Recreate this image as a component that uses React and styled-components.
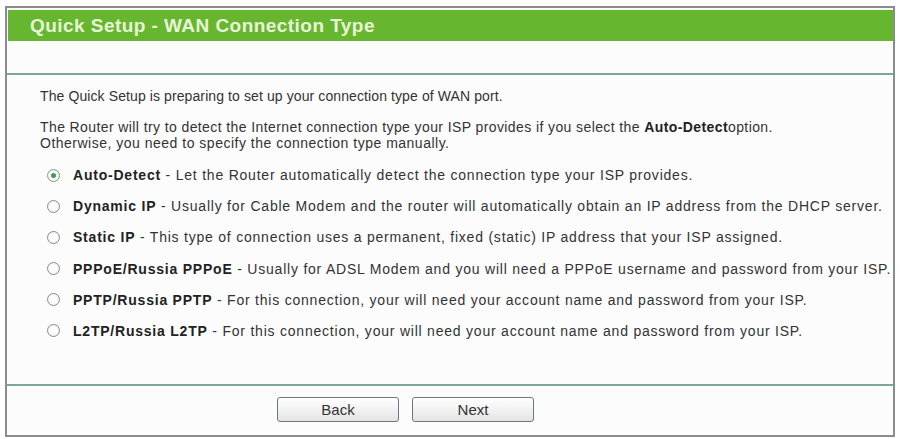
import React, { useState } from 'react';
import styled, { createGlobalStyle } from 'styled-components';

const GlobalStyle = createGlobalStyle`
    html, body {
        margin: 0;
        padding: 0;
        background: #ffffff;
        font-family: "Liberation Sans", Arial, sans-serif;
    }
`;

const options = [
    { id: 'auto', name: 'Auto-Detect', text: 'Let the Router automatically detect the connection type your ISP provides.' },
    { id: 'dynamic', name: 'Dynamic IP', text: 'Usually for Cable Modem and the router will automatically obtain an IP address from the DHCP server.' },
    { id: 'static', name: 'Static IP', text: 'This type of connection uses a permanent, fixed (static) IP address that your ISP assigned.' },
    { id: 'pppoe', name: 'PPPoE/Russia PPPoE', text: 'Usually for ADSL Modem and you will need a PPPoE username and password from your ISP.' },
    { id: 'pptp', name: 'PPTP/Russia PPTP', text: 'For this connection, your will need your account name and password from your ISP.' },
    { id: 'l2tp', name: 'L2TP/Russia L2TP', text: 'For this connection, your will need your account name and password from your ISP.' },
];

export default function App() {
    const [selected, setSelected] = useState('auto');
    return (
        <>
            <GlobalStyle />
            <Frame>
                <TitleBar>Quick Setup - WAN Connection Type</TitleBar>
                <Spacer />
                <Content>
                    <Line spacing={0.1}>The Quick Setup is preparing to set up your connection type of WAN port.</Line>
                    <Para2>
                        <Line spacing={0.4}>
                            The Router will try to detect the Internet connection type your ISP provides if you select the <b>Auto-Detect</b>option.
                        </Line>
                        <Line spacing={0.5}>Otherwise, you need to specify the connection type manually.</Line>
                    </Para2>
                    <OptionList>
                        {options.map(opt => (
                            <OptionRow key={opt.id} onClick={() => setSelected(opt.id)}>
                                <Radio checked={selected === opt.id} />
                                <span><b>{opt.name}</b> - {opt.text}</span>
                            </OptionRow>
                        ))}
                    </OptionList>
                </Content>
                <ButtonBar>
                    <Button>Back</Button>
                    <Button>Next</Button>
                </ButtonBar>
            </Frame>
        </>
    );
}

const Frame = styled.div`
    margin: 6px 5px 2px 5px;
    height: 431px;
    border: 2px solid #8c8c8c;
    padding: 2px 0 0 0;
    background: #fcfcfc;
    display: flex;
    flex-direction: column;
    box-sizing: border-box;
`;

const TitleBar = styled.div`
    height: 31px;
    background: #66b72f;
    color: #e8f5d6;
    font-size: 19px;
    font-weight: bold;
    letter-spacing: 0.45px;
    line-height: 31px;
    padding-left: 22px;
    margin: 0 0 0 1px;
`;

const Spacer = styled.div`
    height: 32px;
    border-bottom: 2px solid #7da79b;
`;

const Content = styled.div`
    flex: 1;
    padding: 13px 0 0 33px;
    border-bottom: 2px solid #7da79b;
    color: #333;
    font-size: 14px;
    b {
        color: #222;
    }
`;

const Line = styled.div`
    line-height: 16px;
    white-space: nowrap;
    letter-spacing: ${({ spacing }) => spacing}px;
`;

const Para2 = styled.div`
    margin-top: 15px;
`;

const OptionList = styled.div`
    margin-top: 16px;
    display: flex;
    flex-direction: column;
    gap: 15.2px;
`;

const OptionRow = styled.div`
    display: flex;
    align-items: center;
    gap: 13px;
    line-height: 16px;
    letter-spacing: 0.78px;
    white-space: nowrap;
    cursor: pointer;
    padding-left: 7px;
`;

const Radio = styled.span`
    width: 11px;
    height: 11px;
    border-radius: 50%;
    border: 1px solid ${({ checked }) => (checked ? '#7f9c88' : '#8d8d8d')};
    background: radial-gradient(circle, #ffffff 40%, #e6e6e6 100%);
    display: flex;
    align-items: center;
    justify-content: center;
    flex-shrink: 0;
    &::after {
        content: '';
        width: 5px;
        height: 5px;
        border-radius: 50%;
        background: ${({ checked }) => (checked ? '#3f9a52' : 'transparent')};
    }
`;

const ButtonBar = styled.div`
    height: 49px;
    display: flex;
    align-items: flex-start;
    gap: 13px;
    padding: 11px 0 0 270px;
    box-sizing: border-box;
`;

const Button = styled.button`
    width: 122px;
    height: 25px;
    border: 1px solid #6e777d;
    border-radius: 3px;
    background: linear-gradient(#ffffff, #e4e4e4);
    font-family: "Liberation Sans", Arial, sans-serif;
    font-size: 15px;
    color: #333;
    padding: 0;
`;
